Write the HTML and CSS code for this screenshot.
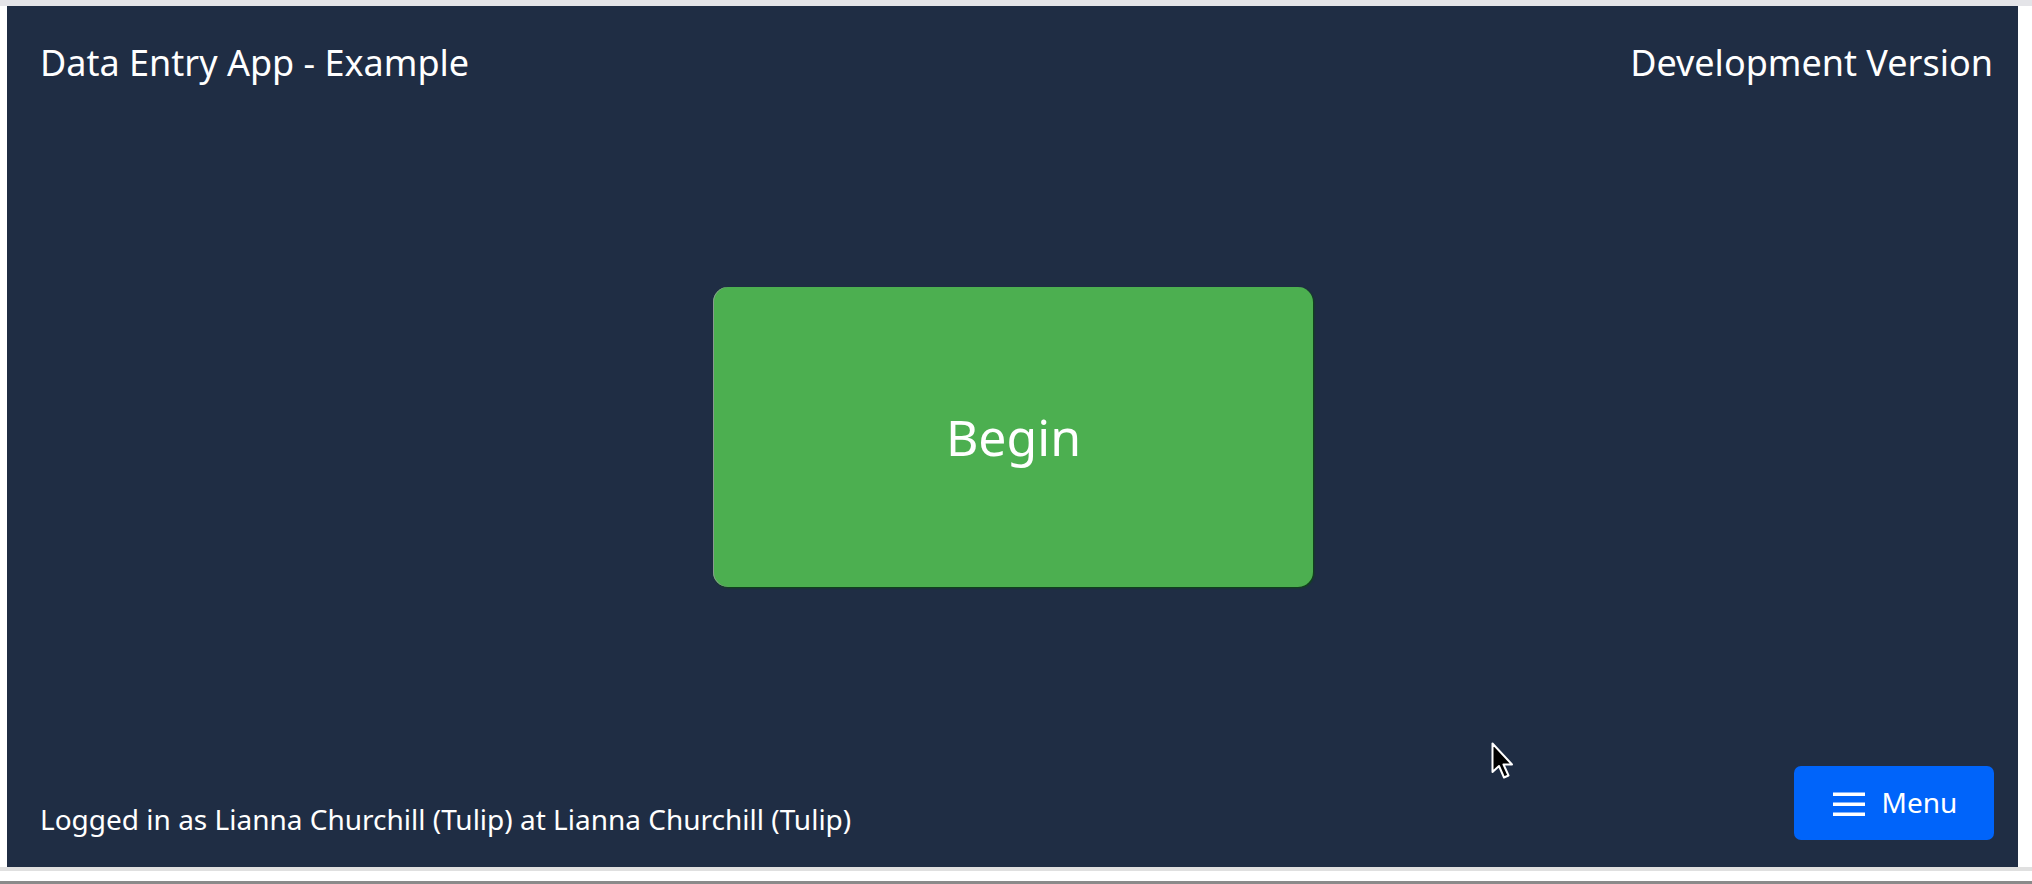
FILE: index.html
```html
<!DOCTYPE html>
<html lang="en">
<head>
	<meta charset="UTF-8">
	<title>Data Entry App - Example</title>
	<link rel="stylesheet" href="styles.css">
</head>
<body>
	<div class="topStrip"></div>
	<div class="stage">
		<div class="app">
			<div class="header">
				<span class="appName">Data Entry App - Example</span>
				<span class="version">Development Version</span>
			</div>
			<div class="main">
				<button class="begin">Begin</button>
			</div>
			<div class="footer">
				<span class="user">Logged in as Lianna Churchill (Tulip) at Lianna Churchill (Tulip)</span>
				<button class="menu">
					<svg width="32" height="24" viewBox="0 0 32 24">
						<rect x="0" y="0.5" width="32" height="3.5" fill="#fff"/>
						<rect x="0" y="10.5" width="32" height="3.5" fill="#fff"/>
						<rect x="0" y="20.5" width="32" height="3.5" fill="#fff"/>
					</svg>
					Menu
				</button>
			</div>
		</div>
		<!-- mouse pointer -->
		<svg class="pointer" width="24" height="38" viewBox="0 0 24 38">
			<path d="M1.5 1.5 L1.5 30 L8 24 L13 35.5 L17.5 33.5 L12.5 22.5 L21 22.5 Z" fill="#000" stroke="#fff" stroke-width="2" stroke-linejoin="round"/>
		</svg>
	</div>
	<div class="bottomStrip"></div>
	<div class="bottomLine"></div>
</body>
</html>
```

FILE: styles.css
```css
body{
	margin: 0;
	background: #fff;
	font-family: "Noto Sans", "Open Sans", sans-serif;
	overflow: hidden;
}
.topStrip{
	height: 6px;
	background: #e4e4e8;
}
.stage{
	position: relative;
	padding-left: 7px;
	width: 2011px;
}
.app{
	height: 861px;
	background: #1f2d44;
	color: #fff;
	display: flex;
	flex-direction: column;
	padding: 0 24px 27px 33px;
	box-sizing: border-box;
}
.header{
	display: flex;
	justify-content: space-between;
	align-items: center;
	height: 112px;
	padding-right: 1px;
	font-size: 36px;
}
.main{
	flex: 1;
	display: flex;
	align-items: center;
	justify-content: center;
	padding-bottom: 10px;
	margin-left: -9px;
}
.begin{
	width: 600px;
	height: 300px;
	border: none;
	border-radius: 15px;
	background: #4caf50;
	color: #fff;
	font-family: inherit;
	font-size: 50px;
	box-shadow: 1px 1px 2px #0c4a10, inset 1px 0 0 #8a9a90;
	padding: 0 0 0 2px;
}
.footer{
	display: flex;
	justify-content: space-between;
	align-items: flex-end;
}
.user{
	font-size: 28px;
	line-height: 38px;
	margin-bottom: 2px;
}
.menu{
	width: 200px;
	height: 74px;
	border: none;
	border-radius: 7px;
	background: #0064fa;
	color: #fff;
	font-family: inherit;
	font-size: 28px;
	display: flex;
	align-items: center;
	justify-content: center;
	gap: 17px;
	padding: 0 0 2px 2px;
}
.menu svg{
	margin-top: 3px;
}
.pointer{
	position: absolute;
	left: 1491px;
	top: 736px;
}
.bottomStrip{
	height: 4px;
	background: #e0e0e0;
}
.bottomLine{
	margin-top: 10px;
	height: 3px;
	background: #8a8a8a;
}
```
